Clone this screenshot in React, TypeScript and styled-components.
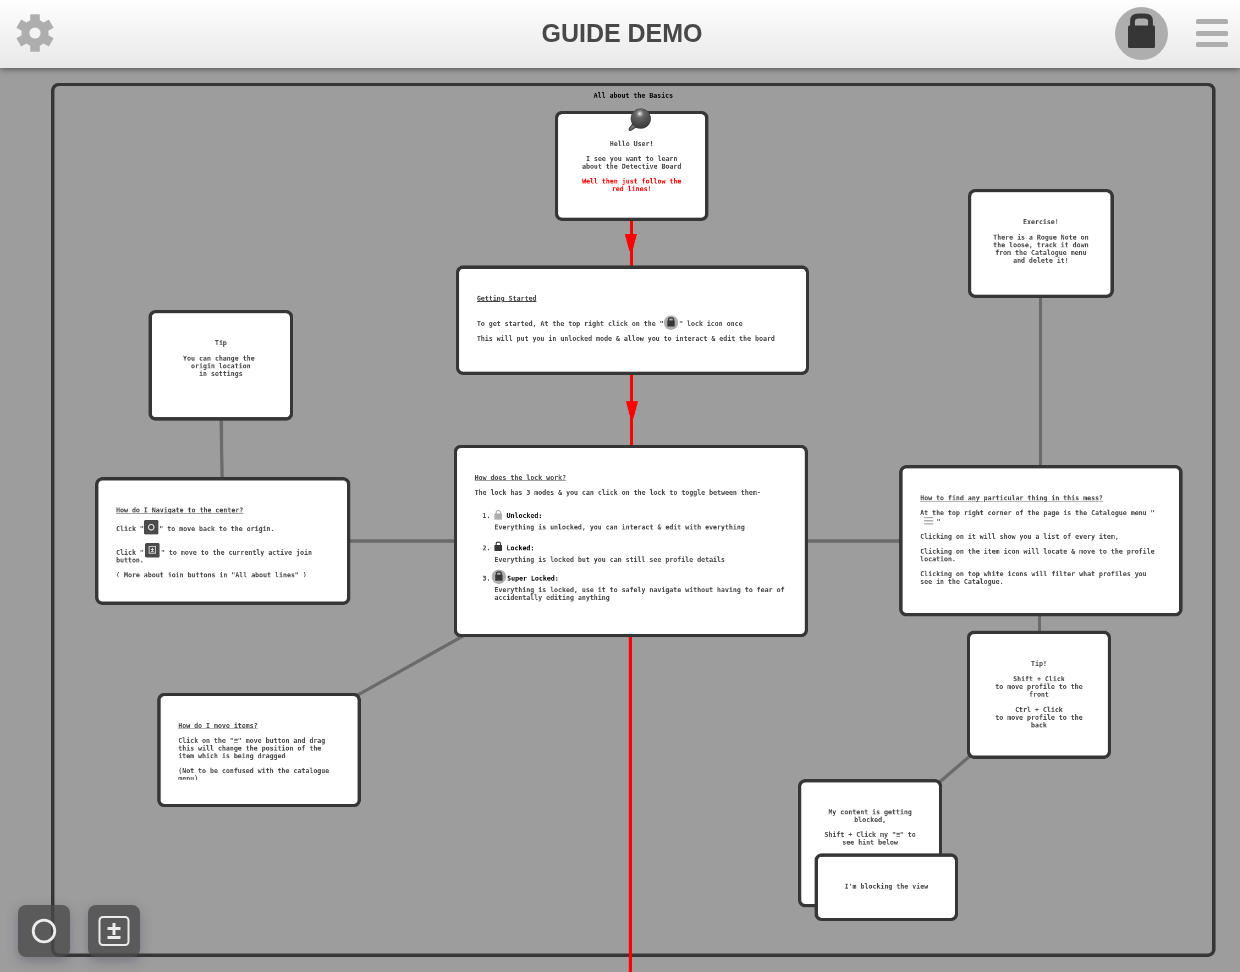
import React from "react";
import styled, { createGlobalStyle, css } from "styled-components";

const ZOOM = 0.55;
const INK = "#363636";

const GlobalStyle = createGlobalStyle`
  * { box-sizing: border-box; }
  body { margin: 0; background: #9d9d9d; font-family: "Liberation Sans", Arial, sans-serif; }
  button { border: 0; padding: 0; background: none; cursor: pointer; font: inherit; }
  svg { display: block; }
`;

const Page = styled.div`
  display: flex;
  flex-direction: column;
  height: 100vh;
  overflow: hidden;
`;

const TopBar = styled.header`
  position: relative;
  z-index: 2;
  flex: none;
  display: grid;
  grid-template-columns: 1fr auto 1fr;
  align-items: center;
  height: 68px;
  padding: 0 12px 2px 16px;
  background: linear-gradient(#fefefe, #e8e8e8);
  box-shadow: 0 1px 6px rgba(0, 0, 0, 0.5);
`;

const Title = styled.h1`
  margin: 0;
  font-size: 25px;
  line-height: 30px;
  color: #484848;
`;

const Actions = styled.div`
  display: flex;
  align-items: center;
  justify-content: flex-end;
  gap: 28px;
`;

const IconButton = styled.button`
  display: flex;
  justify-self: start;
`;

const Canvas = styled.main`
  position: relative;
  flex: 1;
  min-height: 0;
  overflow: hidden;
  background: #9d9d9d;
`;

const Board = styled.div`
  position: absolute;
  top: 0;
  left: 0;
  width: 2300px;
  height: 1720px;
  transform: scale(${ZOOM});
  transform-origin: 0 0;
  will-change: transform;
  font: bold 12px/14px "DejaVu Sans Mono", monospace;
  color: #444;
`;

const Group = styled.section`
  position: absolute;
  left: 93px;
  top: 27px;
  width: 2117px;
  height: 1589px;
  border: 6px solid ${INK};
  border-radius: 14px;
`;

const GroupTitle = styled.h2`
  margin: 10px 0 0;
  font-size: 12px;
  line-height: 14px;
  text-align: center;
  color: #000;
`;

const Lines = styled.svg`
  position: absolute;
  inset: 0;
  width: 100%;
  height: 100%;
`;

type Box = { x: number; y: number; w: number; h: number };

const Card = styled.article<{ $box: Box; $center?: boolean }>`
  position: absolute;
  left: ${(p) => p.$box.x}px;
  top: ${(p) => p.$box.y}px;
  width: ${(p) => p.$box.w}px;
  height: ${(p) => p.$box.h}px;
  padding: 34px 32px 44px;
  border: 6px solid ${INK};
  border-radius: 13px;
  background: #fff;
  ${(p) => p.$center && css`text-align: center;`}
`;

const Content = styled.div`
  height: 100%;
  overflow: hidden;
`;

const Text = styled.p<{ $alert?: boolean }>`
  margin: 13px 0;
  ${(p) => p.$alert && css`color: #f00;`}
`;

const Heading = styled.h3`
  margin: 13px 0;
  font-size: 12px;
  line-height: 14px;
  text-decoration: underline;
`;

const Modes = styled.ol`
  margin: 28px 0 0;
  padding: 0 0 0 36px;
`;

const Mode = styled.li<{ $gap?: number }>`
  margin-bottom: ${(p) => p.$gap ?? 0}px;
`;

const ModeName = styled.strong`
  color: #000;
`;

const ModeText = styled.p`
  margin: 7px 0 0;
`;

/* $drop: how far the icon hangs under the baseline; $above: room kept over it */
const Inline = styled.span<{ $w: number; $h: number; $drop: number; $above?: number; $left?: number; $right?: number }>`
  display: inline-block;
  width: ${(p) => p.$w}px;
  height: ${(p) => p.$h}px;
  vertical-align: -3px;
  margin: ${(p) => p.$above ?? 0}px ${(p) => p.$right ?? 0}px ${(p) => 3 - p.$drop}px ${(p) => p.$left ?? 0}px;
`;

const Pin = styled.svg`
  position: absolute;
  left: 127px;
  top: -12px;
`;

const Tools = styled.nav`
  position: absolute;
  left: 18px;
  bottom: 15px;
  display: flex;
  gap: 18px;
`;

const ToolButton = styled.button`
  display: grid;
  place-items: center;
  width: 52px;
  height: 52px;
  border-radius: 8px;
  background: rgba(74, 74, 74, 0.8);
  box-shadow: 0 4px 12px rgba(60, 50, 80, 0.35);
`;

const Gear = () => (
  <svg width="38" height="38" viewBox="-19 -19 38 38" aria-hidden="true">
    <g fill="#aeaeae">
      {[0, 60, 120].map((a) => (
        <rect key={a} x="-4.8" y="-18.7" width="9.6" height="37.4" transform={`rotate(${a})`} />
      ))}
      <circle r="13.5" />
    </g>
    <circle r="5.6" fill="#f4f4f4" />
  </svg>
);

const LockBadge = ({ size }: { size: number }) => (
  <svg width={size} height={size} viewBox="0 0 53 53" aria-hidden="true">
    <circle cx="26.5" cy="26.5" r="26.5" fill="#aeaeae" />
    <path d="M17.500 20V14Q17.500 9 23.500 9H29.500Q35.500 9 35.500 14V20" fill="none" stroke={INK} strokeWidth="4.800" />
    <rect x="13" y="18.500" width="27" height="22.500" rx="1.500" fill={INK} />
  </svg>
);

const Lock = ({ color }: { color: string }) => (
  <svg width="14" height="17" viewBox="0 0 14 17" aria-hidden="true">
    <path d="M3 7V4Q3 1 6 1H8Q11 1 11 4V7" fill="none" stroke={color} strokeWidth="1.8" />
    <rect x="0" y="6" width="14" height="11" fill={color} />
  </svg>
);

const Bars = ({ width, height }: { width: number; height: number }) => (
  <svg width={width} height={height} viewBox="0 0 31 28" preserveAspectRatio="none" aria-hidden="true">
    <g fill="#aeaeae">
      <rect width="31" height="5" rx="1.500" />
      <rect y="12" width="31" height="5" rx="1.500" />
      <rect y="23" width="31" height="5" rx="1.500" />
    </g>
  </svg>
);

const OriginMini = () => (
  <svg width="26" height="26" viewBox="0 0 26 26" aria-hidden="true">
    <rect width="26" height="26" rx="2" fill="#4a4a4a" />
    <circle cx="13" cy="13" r="5" fill="none" stroke="#eee" strokeWidth="2" />
  </svg>
);

const JoinMini = () => (
  <svg width="26" height="26" viewBox="0 0 26 26" aria-hidden="true">
    <rect width="26" height="26" rx="2" fill="#4a4a4a" />
    <rect x="7" y="6" width="12" height="12" fill="none" stroke="#eee" strokeWidth="1.500" />
    <path d="M13 8.500V14M10.300 11.200H15.700M10.300 15.200H15.700" stroke="#eee" strokeWidth="1.500" />
  </svg>
);

const GREY_LINES = [
  [402, 630, 404, 760],
  [630, 860, 830, 860],
  [1460, 860, 1640, 860],
  [1892, 410, 1892, 730],
  [1890, 990, 1890, 1030],
  [845, 1031, 645, 1143],
  [1768, 1247, 1704, 1302],
];

const RED_LINES = [
  [1148, 270, 1148, 365],
  [1148, 550, 1148, 690],
  [1146, 1030, 1146, 1720],
];

const App = () => (
  <Page>
    <GlobalStyle />
    <TopBar>
      <IconButton aria-label="Settings"><Gear /></IconButton>
      <Title>GUIDE DEMO</Title>
      <Actions>
        <IconButton aria-label="Super locked"><LockBadge size={53} /></IconButton>
        <IconButton aria-label="Catalogue"><Bars width={32} height={28} /></IconButton>
      </Actions>
    </TopBar>
    <Canvas>
      <Board>
        <Group><GroupTitle>All about the Basics</GroupTitle></Group>
        <Lines aria-hidden="true">
          {GREY_LINES.map(([x1, y1, x2, y2]) => (
            <line key={`${x1}-${y1}`} x1={x1} y1={y1} x2={x2} y2={y2} stroke="#6b6b6b" strokeWidth="6" />
          ))}
          {RED_LINES.map(([x1, y1, x2, y2]) => (
            <line key={`${x1}-${y1}`} x1={x1} y1={y1} x2={x2} y2={y2} stroke="#f00" strokeWidth="6" />
          ))}
          <path d="M1136 302h22l-8 30h-6zM1138 606h22l-8 30h-6z" fill="#f00" />
        </Lines>

        <Card $box={{ x: 1009, y: 78, w: 279, h: 200 }} $center>
          <Content>
            <Text>Hello User!</Text>
            <Text>I see you want to learn about the Detective Board</Text>
            <Text $alert>Well then just follow the red lines!</Text>
          </Content>
          <Pin width="44" height="44" viewBox="0 0 44 44" aria-hidden="true">
            <defs>
              <radialGradient id="pinHead" cx="45%" cy="25%" r="70%">
                <stop offset="0" stopColor="#fff" />
                <stop offset="0.14" stopColor="#a0a0a0" />
                <stop offset="0.3" stopColor="#666" />
                <stop offset="1" stopColor="#3c3c3c" />
              </radialGradient>
            </defs>
            <path d="M12 25L2 38Q1 42 5 41L20 32Z" fill="#777" stroke="#3c3c3c" strokeWidth="2" />
            <circle cx="23" cy="20" r="18" fill="url(#pinHead)" stroke="#3c3c3c" strokeWidth="1" />
          </Pin>
        </Card>

        <Card $box={{ x: 829, y: 359, w: 642, h: 199 }}>
          <Content>
            <Heading>Getting Started</Heading>
            <Text>
              To get started, At the top right click on the "
              <Inline $w={26} $h={26} $drop={7} $above={11} $right={2}><LockBadge size={26} /></Inline>
              " lock icon once
            </Text>
            <Text>This will put you in unlocked mode &amp; allow you to interact &amp; edit the board</Text>
          </Content>
        </Card>

        <Card $box={{ x: 825, y: 685, w: 644, h: 350 }}>
          <Content>
            <Heading>How does the lock work?</Heading>
            <Text>The lock has 3 modes &amp; you can click on the lock to toggle between them-</Text>
            <Modes>
              <Mode $gap={24}>
                <Inline $w={14} $h={17} $drop={3} $above={-6} $right={8}><Lock color="#aeaeae" /></Inline>
                <ModeName>Unlocked:</ModeName>
                <ModeText>Everything is unlocked, you can interact &amp; edit with everything</ModeText>
              </Mode>
              <Mode $gap={20}>
                <Inline $w={14} $h={17} $drop={1} $above={-8} $right={8}><Lock color={INK} /></Inline>
                <ModeName>Locked:</ModeName>
                <ModeText>Everything is locked but you can still see profile details</ModeText>
              </Mode>
              <Mode>
                <Inline $w={26} $h={26} $drop={6} $above={-9} $left={-5} $right={2}><LockBadge size={26} /></Inline>
                <ModeName>Super Locked:</ModeName>
                <ModeText>
                  Everything is locked, use it to safely navigate without having to fear of accidentally editing anything
                </ModeText>
              </Mode>
            </Modes>
          </Content>
        </Card>

        <Card $box={{ x: 270, y: 440, w: 263, h: 201 }} $center>
          <Content>
            <Text>
              Tip<br /><br />
              You can change the&nbsp;<br />
              origin location<br />
              in settings
            </Text>
          </Content>
        </Card>

        <Card $box={{ x: 173, y: 744, w: 464, h: 232 }}>
          <Content>
            <Heading>How do I Navigate to the center?</Heading>
            <Text>
              Click "<Inline $w={26} $h={26} $drop={6} $above={-2} $right={2}><OriginMini /></Inline>" to move back to the origin.
            </Text>
            <Text>
              Click "<Inline $w={26} $h={26} $drop={5} $above={6} $left={2} $right={3}><JoinMini /></Inline>" to move to
              the currently active join button.
            </Text>
            <Text>( More about join buttons in "All about lines" )</Text>
          </Content>
        </Card>

        <Card $box={{ x: 286, y: 1136, w: 370, h: 208 }}>
          <Content>
            <Heading>How do I move items?</Heading>
            <Text>Click on the "≡" move button and drag this will change the position of the item which is being dragged</Text>
            <Text>(Not to be confused with the catalogue menu)</Text>
          </Content>
        </Card>

        <Card $box={{ x: 1760, y: 220, w: 265, h: 198 }} $center>
          <Content>
            <Text>
              Exercise!<br /><br />
              There is a Rogue Note on the loose, track it down from the Catalogue menu and delete it!
            </Text>
          </Content>
        </Card>

        <Card $box={{ x: 1635, y: 722, w: 515, h: 275 }}>
          <Content>
            <Heading>How to find any particular thing in this mess?</Heading>
            <Text>
              At the top right corner of the page is the Catalogue menu "
              <Inline $w={17} $h={14} $drop={1} $left={7} $right={6}><Bars width={17} height={14} /></Inline>"
            </Text>
            <Text>Clicking on it will show you a list of every item,</Text>
            <Text>Clicking on the item icon will locate &amp; move to the profile location.</Text>
            <Text>Clicking on top white icons will filter what profiles you see in the Catalogue.</Text>
          </Content>
        </Card>

        <Card $box={{ x: 1758, y: 1023, w: 262, h: 233 }} $center>
          <Content>
            <Text>
              Tip!<br /><br />
              Shift + Click<br />
              to move profile to the front<br /><br />
              Ctrl + Click<br />
              to move profile to the back
            </Text>
          </Content>
        </Card>

        <Card $box={{ x: 1451, y: 1293, w: 262, h: 233 }} $center>
          <Content>
            <Text>My content is getting blocked,</Text>
            <Text>Shift + Click my "≡" to see hint below</Text>
          </Content>
        </Card>

        <Card $box={{ x: 1481, y: 1428, w: 261, h: 123 }} $center>
          <Content>
            <Text>I'm blocking the view</Text>
          </Content>
        </Card>
      </Board>

      <Tools aria-label="Board tools">
        <ToolButton aria-label="Move to origin">
          <svg width="26" height="26" viewBox="0 0 26 26" aria-hidden="true">
            <circle cx="13" cy="13" r="10.800" fill="none" stroke="#ececec" strokeWidth="2.800" />
          </svg>
        </ToolButton>
        <ToolButton aria-label="Move to join button">
          <svg width="32" height="32" viewBox="0 0 32 32" aria-hidden="true">
            <rect x="1.500" y="2" width="29" height="28" rx="3.500" fill="none" stroke="#ececec" strokeWidth="2" />
            <path d="M16 8V20M9.500 13.500H22.500M9.500 22.500H22.500" fill="none" stroke="#ececec" strokeWidth="3" />
          </svg>
        </ToolButton>
      </Tools>
    </Canvas>
  </Page>
);

export default App;
